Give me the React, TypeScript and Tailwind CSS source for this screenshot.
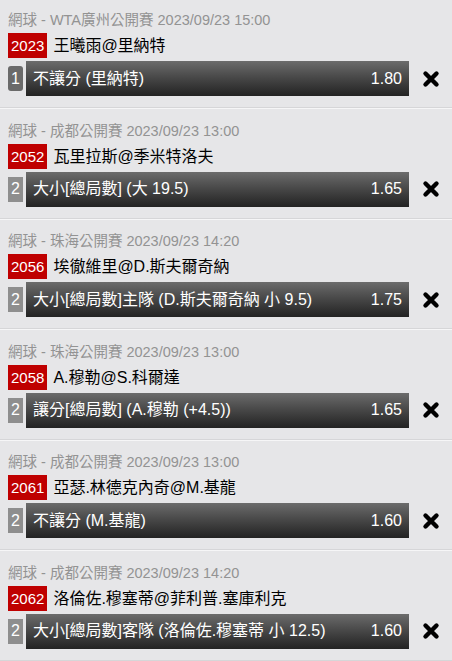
import React from "react";

type Bet = {
  header: string;
  id: string;
  match: string;
  num: string;
  first?: boolean;
  bet: string;
  odds: string;
};

const bets: Bet[] = [
  { header: "網球 - WTA廣州公開賽 2023/09/23 15:00", id: "2023", match: "王曦雨@里納特", num: "1", first: true, bet: "不讓分 (里納特)", odds: "1.80" },
  { header: "網球 - 成都公開賽 2023/09/23 13:00", id: "2052", match: "瓦里拉斯@季米特洛夫", num: "2", bet: "大小[總局數] (大 19.5)", odds: "1.65" },
  { header: "網球 - 珠海公開賽 2023/09/23 14:20", id: "2056", match: "埃徹維里@D.斯夫爾奇納", num: "2", bet: "大小[總局數]主隊 (D.斯夫爾奇納 小 9.5)", odds: "1.75" },
  { header: "網球 - 珠海公開賽 2023/09/23 13:00", id: "2058", match: "A.穆勒@S.科爾達", num: "2", bet: "讓分[總局數] (A.穆勒 (+4.5))", odds: "1.65" },
  { header: "網球 - 成都公開賽 2023/09/23 13:00", id: "2061", match: "亞瑟.林德克內奇@M.基龍", num: "2", bet: "不讓分 (M.基龍)", odds: "1.60" },
  { header: "網球 - 成都公開賽 2023/09/23 14:20", id: "2062", match: "洛倫佐.穆塞蒂@菲利普.塞庫利克", num: "2", bet: "大小[總局數]客隊 (洛倫佐.穆塞蒂 小 12.5)", odds: "1.60" },
];

function XIcon() {
  return (
    <svg width="18" height="18" viewBox="0 0 18 18" className="block">
      <path d="M3.5 3.5 L14.5 14.5 M14.5 3.5 L3.5 14.5" stroke="#000" strokeWidth="4.4" strokeLinecap="round" fill="none" />
    </svg>
  );
}

function Card({ b }: { b: Bet }) {
  return (
    <div className="h-[110.6px] flex flex-col">
      <div className="pt-[10px] flex-1">
        <div className="pl-2 h-5 leading-5 text-[14.5px] text-[#939393] whitespace-nowrap">{b.header}</div>
        <div className="pl-2 mt-[3px] h-[25px] flex items-center">
          <span className="h-[25px] px-[3px] bg-[#bf0000] text-white text-[15px] leading-[25px]">{b.id}</span>
          <span className="ml-[6px] text-[16px] text-black leading-[25px] whitespace-nowrap">{b.match}</span>
        </div>
        <div className="pl-2 mt-[3px] h-[35px] flex items-center">
          <span
            className={
              b.first
                ? "w-[15px] h-[25px] flex items-center justify-center bg-[#6a6a6a] rounded-[3px] text-white text-[16px]"
                : "w-[15px] h-[25px] flex items-center justify-center bg-[#8e8e8e] text-white text-[16px]"
            }
          >
            {b.num}
          </span>
          <div className="ml-[3px] w-[383px] h-[35px] flex items-center justify-between pl-[7px] pr-[7px] bg-gradient-to-b from-[#6c6c6c] to-[#232323] text-white text-[16px]">
            <span className="whitespace-nowrap">{b.bet}</span>
            <span>{b.odds}</span>
          </div>
          <div className="flex-1 flex items-center justify-center">
            <XIcon />
          </div>
        </div>
      </div>
      <div className="h-px bg-[#d6d6d8]" />
      <div className="h-px bg-[#f6f6f7]" />
      <div className="h-[1.6px]" />
    </div>
  );
}

export default function App() {
  return (
    <div
      className="w-[452px] h-[661px] overflow-hidden bg-[#e6e6e8]"
      style={{ fontFamily: '"Liberation Sans", Arial, "Noto Sans CJK TC", sans-serif' }}
    >
      {bets.map((b, i) => (
        <Card key={i} b={b} />
      ))}
    </div>
  );
}
